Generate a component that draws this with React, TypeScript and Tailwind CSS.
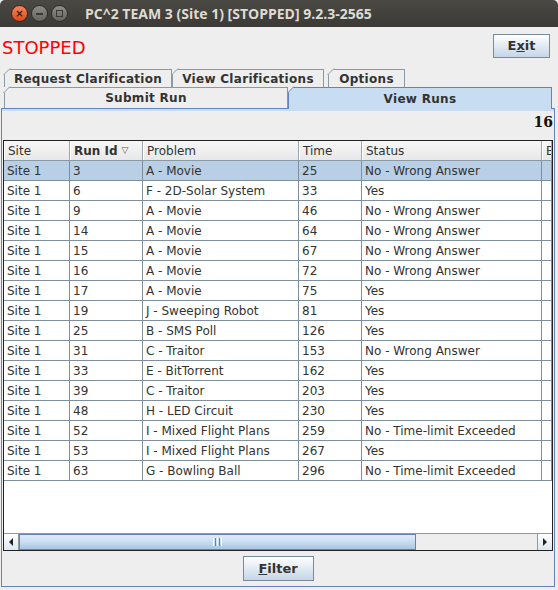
import React from "react";

const rows: [string, string, string, string, string][] = [
  ["Site 1", "3", "A - Movie", "25", "No - Wrong Answer"],
  ["Site 1", "6", "F - 2D-Solar System", "33", "Yes"],
  ["Site 1", "9", "A - Movie", "46", "No - Wrong Answer"],
  ["Site 1", "14", "A - Movie", "64", "No - Wrong Answer"],
  ["Site 1", "15", "A - Movie", "67", "No - Wrong Answer"],
  ["Site 1", "16", "A - Movie", "72", "No - Wrong Answer"],
  ["Site 1", "17", "A - Movie", "75", "Yes"],
  ["Site 1", "19", "J - Sweeping Robot", "81", "Yes"],
  ["Site 1", "25", "B - SMS Poll", "126", "Yes"],
  ["Site 1", "31", "C - Traitor", "153", "No - Wrong Answer"],
  ["Site 1", "33", "E - BitTorrent", "162", "Yes"],
  ["Site 1", "39", "C - Traitor", "203", "Yes"],
  ["Site 1", "48", "H - LED Circuit", "230", "Yes"],
  ["Site 1", "52", "I - Mixed Flight Plans", "259", "No - Time-limit Exceeded"],
  ["Site 1", "53", "I - Mixed Flight Plans", "267", "Yes"],
  ["Site 1", "63", "G - Bowling Ball", "296", "No - Time-limit Exceeded"],
];

const cols = ["w-[66px]", "w-[73px]", "w-[156px]", "w-[63px]", "w-[180px]", "flex-1"];

function Tab({ label, className, selected }: { label: string; className: string; selected?: boolean }) {
  return (
    <div
      className={`relative flex items-center justify-center border-l border-t border-r font-bold text-[12px] text-[#333333] ${
        selected ? "bg-[#c8ddf2] border-[#6382bf]" : "bg-[#eeeeee] border-[#8a99a6]"
      } ${className}`}
      style={{ clipPath: "polygon(6px 0, 100% 0, 100% 100%, 0 100%, 0 6px)" }}
    >
      <span className="tracking-[0.3px]">{label}</span>
    </div>
  );
}

function Corner({ selected }: { selected?: boolean }) {
  return (
    <svg className="absolute left-[-1px] top-[-1px]" width="8" height="8">
      <line x1="0.5" y1="7" x2="7" y2="0.5" stroke={selected ? "#6382bf" : "#8a99a6"} strokeWidth="1" />
    </svg>
  );
}

export default function App() {
  return (
    <div
      className="w-[558px] h-[590px] bg-[#eeeeee] flex flex-col overflow-hidden"
      style={{ fontFamily: '"DejaVu Sans", sans-serif' }}
    >
      {/* title bar */}
      <div className="h-[27px] bg-gradient-to-b from-[#4a4944] to-[#3b3a36] flex items-center rounded-t-[5px] shrink-0">
        <div className="flex items-center gap-[3px] ml-[11px]">
          <div className="w-[17px] h-[17px] rounded-full bg-gradient-to-b from-[#f5855c] to-[#d9481a] border border-[#3a2a20] flex items-center justify-center text-[#3b1a0c] text-[10px] font-bold leading-none">
            ×
          </div>
          <div className="w-[17px] h-[17px] rounded-full bg-gradient-to-b from-[#8f8d87] to-[#66645f] border border-[#2e2d2a] flex items-center justify-center">
            <div className="w-[7px] h-[2px] bg-[#3a3935]" />
          </div>
          <div className="w-[17px] h-[17px] rounded-full bg-gradient-to-b from-[#8f8d87] to-[#66645f] border border-[#2e2d2a] flex items-center justify-center">
            <div className="w-[7px] h-[7px] border border-[#3a3935]" />
          </div>
        </div>
        <div
          className="ml-[17px] text-[14px] font-bold text-[#dfdbd2]"
          style={{ fontFamily: '"Open Sans", "DejaVu Sans", sans-serif' }}
        >
          PC^2 TEAM 3 (Site 1) [STOPPED] 9.2.3-2565
        </div>
      </div>

      {/* top row */}
      <div className="h-[42px] flex items-center justify-between shrink-0 pl-[2px] pr-[8px]">
        <div className="text-[18px] text-[#ff0000] mt-[-1px]">STOPPED</div>
        <button className="w-[57px] h-[24px] mt-[-5px] border border-[#7a8a99] bg-gradient-to-b from-[#ffffff] to-[#c5d5e8] text-[13px] font-bold text-[#333333]">
          E<span className="underline">x</span>it
        </button>
      </div>

      {/* tabs */}
      <div className="h-[18px] flex pl-[4px] shrink-0">
        <div className="relative w-[168px] h-full">
          <Tab label="Request Clarification" className="w-full h-full" />
          <Corner />
        </div>
        <div className="relative w-[152px] h-full">
          <Tab label="View Clarifications" className="w-full h-full" />
          <Corner />
        </div>
        <div className="relative w-[77px] h-full ml-[4px]">
          <Tab label="Options" className="w-full h-full" />
          <Corner />
        </div>
      </div>
      <div className="h-[21px] flex pl-[4px] shrink-0">
        <div className="relative w-[284px] h-full">
          <Tab label="Submit Run" className="w-full h-full" />
          <Corner />
        </div>
        <div className="relative w-[264px] h-[22px]">
          <Tab label="View Runs" className="w-full h-full border-b-0" selected />
          <Corner selected />
        </div>
      </div>

      {/* panel */}
      <div className="flex-1 mx-[1px] mr-[3px] mb-[3px] border border-[#6382bf] flex flex-col">
        <div className="h-[2px] bg-[#c8ddf2]" />
        <div className="h-[29px] flex items-end justify-end pb-[7px] pr-[1px]">
          <span className="text-[14px] font-bold text-[#111111]" style={{ fontFamily: '"DejaVu Serif", serif' }}>
            16
          </span>
        </div>
        {/* table scroll pane */}
        <div className="mx-[1px] h-[411px] border border-[#222222] bg-white flex flex-col overflow-hidden">
          <div className="flex h-[20px] bg-gradient-to-b from-[#f7f7f7] to-[#e8e8e8] border-b border-[#8a99a6] text-[12px] text-[#333333] shrink-0">
            {["Site", "Run Id", "Problem", "Time", "Status", "B"].map((h, i) => (
              <div
                key={h}
                className={`${cols[i]} border-r border-[#9aa6b2] px-[3px] flex items-center whitespace-nowrap overflow-hidden border-l border-l-white ${
                  i === 1 ? "font-bold" : ""
                }`}
              >
                {h}
                {i === 1 && <span className="ml-[4px] text-[9px] font-normal text-[#555555]">▽</span>}
              </div>
            ))}
          </div>
          <div className="flex-1">
            {rows.map((r, ri) => (
              <div
                key={ri}
                className={`flex h-[20px] border-b border-[#7f8fa0] text-[12px] text-[#333333] ${
                  ri === 0 ? "bg-[#b8cfe5]" : "bg-white"
                }`}
              >
                {[...r, ""].map((c, ci) => (
                  <div
                    key={ci}
                    className={`${cols[ci]} border-r border-[#7f8fa0] px-[3px] flex items-center whitespace-nowrap overflow-hidden`}
                  >
                    {c}
                  </div>
                ))}
              </div>
            ))}
          </div>
          {/* horizontal scrollbar */}
          <div className="h-[17px] flex border-t border-[#8a99a6] bg-[#eeeeee] shrink-0">
            <div className="w-[15px] border-r border-[#8a99a6] bg-gradient-to-b from-[#ffffff] to-[#dde6f0] flex items-center justify-center">
              <div className="w-0 h-0 border-y-[4px] border-y-transparent border-r-[4px] border-r-[#222222]" />
            </div>
            <div className="w-[397px] border border-[#6382bf] bg-gradient-to-b from-[#e2ecf8] via-[#c8ddf2] to-[#a9c3e0] flex items-center justify-center gap-[1px]">
              <div className="w-[1px] h-[8px] bg-white" />
              <div className="w-[1px] h-[8px] bg-[#6382bf]" />
              <div className="w-[1px] h-[8px] bg-white" />
              <div className="w-[1px] h-[8px] bg-[#6382bf]" />
              <div className="w-[1px] h-[8px] bg-white" />
            </div>
            <div className="flex-1" />
            <div className="w-[15px] border-l border-[#8a99a6] bg-gradient-to-b from-[#ffffff] to-[#dde6f0] flex items-center justify-center">
              <div className="w-0 h-0 border-y-[4px] border-y-transparent border-l-[4px] border-l-[#222222]" />
            </div>
          </div>
        </div>
        <div className="flex-1 flex items-center justify-center">
          <button className="w-[71px] h-[25px] border border-[#7a8a99] bg-gradient-to-b from-[#ffffff] to-[#c5d5e8] text-[13px] font-bold text-[#333333]">
            <span className="underline">F</span>ilter
          </button>
        </div>
      </div>
    </div>
  );
}
